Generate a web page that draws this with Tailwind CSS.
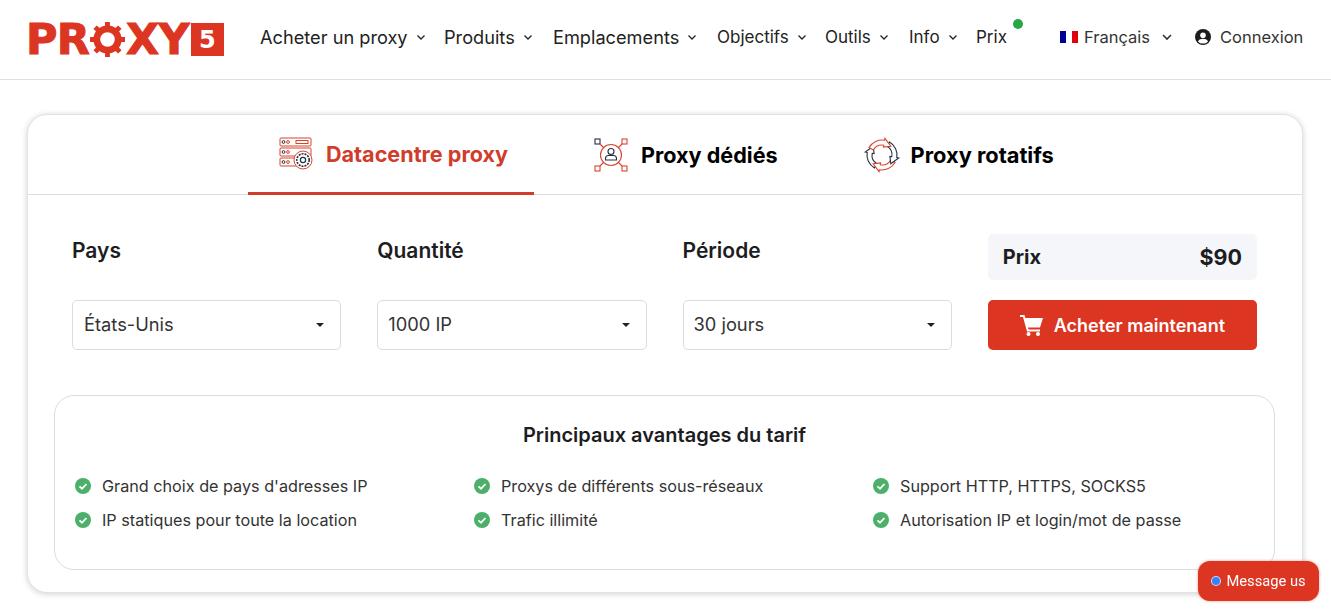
<!DOCTYPE html>
<html lang="fr">
<head>
    <meta charset="UTF-8">
    <meta name="viewport" content="width=device-width, initial-scale=1.0">
    <script src="https://cdn.jsdelivr.net/npm/@tailwindcss/browser@4"></script>
    <title>Proxy5</title>
</head>
<body class="bg-white font-['Inter',sans-serif] text-[#1d1d1f] h-[612px] overflow-hidden">
    <header class="h-[80px] border-b border-[#dfdfdf] flex items-center pl-[28px]">
        <a href="#" class="flex items-center w-[232px] text-[#dc3522]">
            <span class="-ml-[2px] font-['DejaVu_Sans',sans-serif] font-bold text-[43px] leading-none flex items-center tracking-[-0.8px] [-webkit-text-stroke:1px_#dc3522]">
                <span>PR</span>
                <svg class="w-[35px] h-[35px] mx-[1px]" viewBox="0 0 36 36" aria-hidden="true">
                    <circle cx="18" cy="18" r="11" fill="none" stroke="#dc3522" stroke-width="7"/>
                    <path fill="none" stroke="#dc3522" stroke-width="5" d="M18 0v5M18 31v5M0 18h5M31 18h5M5.3 5.3l3.5 3.5M27.2 27.2l3.5 3.5M5.3 30.7l3.5-3.5M27.2 8.8l3.5-3.5"/>
                </svg>
                <span>XY</span>
            </span>
            <span class="ml-[2px] w-[33px] h-[33px] bg-[#dc3522] text-white font-['DejaVu_Sans',sans-serif] font-bold text-[24px] leading-none flex items-center justify-center">5</span>
        </a>
        <nav class="flex items-center text-[#222] mb-[4px]">
            <a href="#" class="flex items-center text-[18.2px] w-[184px]">Acheter un proxy<svg class="ml-[8px] w-[10px] h-[10px]" viewBox="0 0 10 10" fill="none" stroke="currentColor" stroke-width="1.3"><path d="M1.5 3.5 5 7l3.5-3.5"/></svg></a>
            <a href="#" class="flex items-center text-[18.2px] w-[109px]">Produits<svg class="ml-[8px] w-[10px] h-[10px]" viewBox="0 0 10 10" fill="none" stroke="currentColor" stroke-width="1.3"><path d="M1.5 3.5 5 7l3.5-3.5"/></svg></a>
            <a href="#" class="flex items-center text-[18.2px] w-[164px]">Emplacements<svg class="ml-[8px] w-[10px] h-[10px]" viewBox="0 0 10 10" fill="none" stroke="currentColor" stroke-width="1.3"><path d="M1.5 3.5 5 7l3.5-3.5"/></svg></a>
            <a href="#" class="flex items-center text-[17px] w-[108px]">Objectifs<svg class="ml-[8px] w-[10px] h-[10px]" viewBox="0 0 10 10" fill="none" stroke="currentColor" stroke-width="1.3"><path d="M1.5 3.5 5 7l3.5-3.5"/></svg></a>
            <a href="#" class="flex items-center text-[17px] w-[84px]">Outils<svg class="ml-[8px] w-[10px] h-[10px]" viewBox="0 0 10 10" fill="none" stroke="currentColor" stroke-width="1.3"><path d="M1.5 3.5 5 7l3.5-3.5"/></svg></a>
            <a href="#" class="flex items-center text-[17px] w-[67px]">Info<svg class="ml-[8px] w-[10px] h-[10px]" viewBox="0 0 10 10" fill="none" stroke="currentColor" stroke-width="1.3"><path d="M1.5 3.5 5 7l3.5-3.5"/></svg></a>
            <a href="#" class="relative text-[17px] w-[84px]">Prix<span class="absolute left-[37px] top-[-6px] w-[10px] h-[10px] rounded-full bg-[#28a745]"></span></a>
        </nav>
        <div class="flex items-center text-[16.5px] text-[#333] w-[135px] mb-[5px]">
            <span class="flex w-[18px] h-[12px] mr-[6px]"><i class="flex-1 bg-[#000091]"></i><i class="flex-1 bg-white"></i><i class="flex-1 bg-[#e1000f]"></i></span>
            Français
            <svg class="ml-[11px] w-[12px] h-[12px]" viewBox="0 0 12 12" fill="none" stroke="currentColor" stroke-width="1.6"><path d="M2 4l4 4 4-4"/></svg>
        </div>
        <div class="flex items-center text-[16.5px] text-[#333] mb-[5px]">
            <svg class="w-[16px] h-[16px] mr-[9px]" viewBox="0 0 16 16"><circle cx="8" cy="8" r="8" fill="#1d1d1f"/><circle cx="8" cy="6.2" r="2.8" fill="#fff"/><path fill="#fff" d="M3 12.4c1-2 3-2.6 5-2.6s4 .6 5 2.6A6.6 6.6 0 0 1 8 14.6a6.6 6.6 0 0 1-5-2.2z"/></svg>
            Connexion
        </div>
    </header>

    <main class="mt-[34px] ml-[27px] mr-[28px] h-[479px] rounded-[20px] border border-[#e3e3e3] shadow-[0_1px_6px_rgba(0,0,0,0.18)] bg-white">
        <div class="h-[80px] border-b border-[#dcdcdc] flex pl-[220px]">
            <a href="#" class="w-[286px] h-[80px] border-b-[3px] border-[#d03d2a] flex items-center justify-center gap-[13px] text-[#d03d2a] font-bold text-[21.6px] pt-[1px] pl-[5px]">
                <svg class="w-[34px] h-[34px] -mt-[3px]" viewBox="0 0 34 34" fill="none" stroke="#d9432f" stroke-width="1">
                    <rect x="1" y="2" width="31" height="8" rx="1"/><rect x="1" y="12" width="31" height="8" rx="1"/><rect x="1" y="22" width="22" height="8" rx="1"/>
                    <rect x="17" y="4.5" width="12" height="3"/>
                    <circle cx="4.5" cy="6" r="1.4" stroke="#24303f"/><circle cx="9" cy="6" r="1.4"/><circle cx="4.5" cy="16" r="1.4" stroke="#24303f"/><circle cx="9" cy="16" r="1.4"/><circle cx="4.5" cy="26" r="1.4" stroke="#24303f"/><circle cx="9" cy="26" r="1.4"/>
                    <circle cx="24" cy="24" r="9" fill="#fff"/>
                    <circle cx="24" cy="24" r="6.2" stroke="#24303f" stroke-width="1.6" stroke-dasharray="2 1"/><circle cx="24" cy="24" r="2.6" stroke="#24303f" stroke-width="1.2"/>
                </svg>
                Datacentre proxy
            </a>
            <a href="#" class="ml-[60px] h-[80px] flex items-center gap-[13px] font-bold text-[21.6px] text-black">
                <svg class="w-[34px] h-[34px]" viewBox="0 0 34 34" fill="none" stroke="#d9432f" stroke-width="1.1">
                    <rect x="1" y="1" width="5" height="5" stroke="#24303f"/><rect x="28" y="1" width="5" height="5"/><rect x="1" y="28" width="5" height="5"/><rect x="28" y="28" width="5" height="5"/>
                    <path d="M6 6l4 4M28 6l-4 4M6 28l4-4M28 28l-4-4"/>
                    <circle cx="17" cy="17" r="10.5"/>
                    <circle cx="17" cy="13.5" r="3" stroke="#24303f"/><path stroke="#24303f" d="M11.5 22v-1.5a3 3 0 0 1 3-3h5a3 3 0 0 1 3 3V22z"/>
                </svg>
                Proxy dédiés
            </a>
            <a href="#" class="ml-[85px] h-[80px] flex items-center gap-[10px] font-bold text-[21.8px] text-black">
                <svg class="w-[38px] h-[38px]" viewBox="0 0 38 38" fill="#fff" stroke-width="1.1">
                    <path stroke="#24303f" transform="rotate(270 19 19)" d="M6 11.5A15 15 0 0 1 21.6 4.2L22 2.3L27.8 10.2L20.4 11.1L20.7 9.2A10 10 0 0 0 10.3 14Z"/>
                    <path stroke="#d9432f" transform="rotate(180 19 19)" d="M6 11.5A15 15 0 0 1 21.6 4.2L22 2.3L27.8 10.2L20.4 11.1L20.7 9.2A10 10 0 0 0 10.3 14Z"/>
                    <path stroke="#24303f" transform="rotate(90 19 19)" d="M6 11.5A15 15 0 0 1 21.6 4.2L22 2.3L27.8 10.2L20.4 11.1L20.7 9.2A10 10 0 0 0 10.3 14Z"/>
                    <path stroke="#d9432f" d="M6 11.5A15 15 0 0 1 21.6 4.2L22 2.3L27.8 10.2L20.4 11.1L20.7 9.2A10 10 0 0 0 10.3 14Z"/>
                </svg>
                Proxy rotatifs
            </a>
        </div>

        <div class="grid grid-cols-4 gap-x-[36px] pl-[44px] pr-[45px] pt-[39px]">
            <div>
                <div class="h-[46px] text-[21px] font-semibold leading-[34px]">Pays</div>
                <div class="mt-[20px] h-[50px] border border-[#dcdcdc] rounded-[5px] flex items-center justify-between pl-[11px] pr-[16px] text-[18.3px] text-[#333]">États-Unis<span class="border-x-[4px] border-x-transparent border-t-[4px] border-t-[#222]"></span></div>
            </div>
            <div>
                <div class="h-[46px] text-[21px] font-semibold leading-[34px]">Quantité</div>
                <div class="mt-[20px] h-[50px] border border-[#dcdcdc] rounded-[5px] flex items-center justify-between pl-[10px] pr-[16px] text-[18.3px] text-[#333]">1000 IP<span class="border-x-[4px] border-x-transparent border-t-[4px] border-t-[#222]"></span></div>
            </div>
            <div>
                <div class="h-[46px] text-[21px] font-semibold leading-[34px]">Période</div>
                <div class="mt-[20px] h-[50px] border border-[#dcdcdc] rounded-[5px] flex items-center justify-between pl-[10px] pr-[16px] text-[18.3px] text-[#333]">30 jours<span class="border-x-[4px] border-x-transparent border-t-[4px] border-t-[#222]"></span></div>
            </div>
            <div>
                <div class="h-[46px] bg-[#f4f6fa] rounded-[5px] flex items-center justify-between px-[15px] font-bold">
                    <span class="text-[20px]">Prix</span><span class="text-[21.5px]">$90</span>
                </div>
                <button class="mt-[20px] w-full h-[50px] bg-[#dc3522] rounded-[5px] text-white font-semibold text-[18px] flex items-center justify-center gap-[10px]">
                    <svg class="w-[24px] h-[21px]" viewBox="0 0 24 21" fill="#fff"><path d="M0 0h4.5l.8 3H23l-3 9.5H8l.5 2H20v2H7L3 2H0z"/><circle cx="8.5" cy="19" r="2"/><circle cx="18" cy="19" r="2"/></svg>
                    Acheter maintenant
                </button>
            </div>
        </div>

        <section class="mt-[45px] ml-[26px] mr-[27px] h-[175px] rounded-[20px] border border-[#dcdcdc] pt-[25px] px-[20px]">
            <h2 class="text-center text-[20px] leading-[28px] font-semibold text-[#1d1d1f]">Principaux avantages du tarif</h2>
            <ul class="mt-[25px] grid grid-cols-[399px_399px_1fr] gap-y-[10px] text-[16.2px] leading-[24px] text-[#333]">
                <li class="flex items-center gap-[11px]"><svg class="w-[16px] h-[16px]" viewBox="0 0 16 16"><circle cx="8" cy="8" r="8" fill="#4caf6a"/><path d="M4.5 8.3 7 10.7l4.5-4.7" fill="none" stroke="#fff" stroke-width="1.8"/></svg>Grand choix de pays d'adresses IP</li>
                <li class="flex items-center gap-[11px]"><svg class="w-[16px] h-[16px]" viewBox="0 0 16 16"><circle cx="8" cy="8" r="8" fill="#4caf6a"/><path d="M4.5 8.3 7 10.7l4.5-4.7" fill="none" stroke="#fff" stroke-width="1.8"/></svg>Proxys de différents sous-réseaux</li>
                <li class="flex items-center gap-[11px]"><svg class="w-[16px] h-[16px]" viewBox="0 0 16 16"><circle cx="8" cy="8" r="8" fill="#4caf6a"/><path d="M4.5 8.3 7 10.7l4.5-4.7" fill="none" stroke="#fff" stroke-width="1.8"/></svg>Support HTTP, HTTPS, SOCKS5</li>
                <li class="flex items-center gap-[11px]"><svg class="w-[16px] h-[16px]" viewBox="0 0 16 16"><circle cx="8" cy="8" r="8" fill="#4caf6a"/><path d="M4.5 8.3 7 10.7l4.5-4.7" fill="none" stroke="#fff" stroke-width="1.8"/></svg>IP statiques pour toute la location</li>
                <li class="flex items-center gap-[11px]"><svg class="w-[16px] h-[16px]" viewBox="0 0 16 16"><circle cx="8" cy="8" r="8" fill="#4caf6a"/><path d="M4.5 8.3 7 10.7l4.5-4.7" fill="none" stroke="#fff" stroke-width="1.8"/></svg>Trafic illimité</li>
                <li class="flex items-center gap-[11px]"><svg class="w-[16px] h-[16px]" viewBox="0 0 16 16"><circle cx="8" cy="8" r="8" fill="#4caf6a"/><path d="M4.5 8.3 7 10.7l4.5-4.7" fill="none" stroke="#fff" stroke-width="1.8"/></svg>Autorisation IP et login/mot de passe</li>
            </ul>
        </section>
    </main>

    <a href="#" class="fixed left-[1198px] top-[561px] w-[121px] h-[40px] rounded-[12px] bg-[#dc3522] text-[#fff] font-['Roboto',sans-serif] text-[14.7px] flex items-center justify-center gap-[5px] shadow-[0_0_3px_rgba(220,53,34,0.5)]">
        <span class="w-[10px] h-[10px] rounded-full bg-[#3b82f6] border border-white/70"></span>Message us
    </a>
</body>
</html>
